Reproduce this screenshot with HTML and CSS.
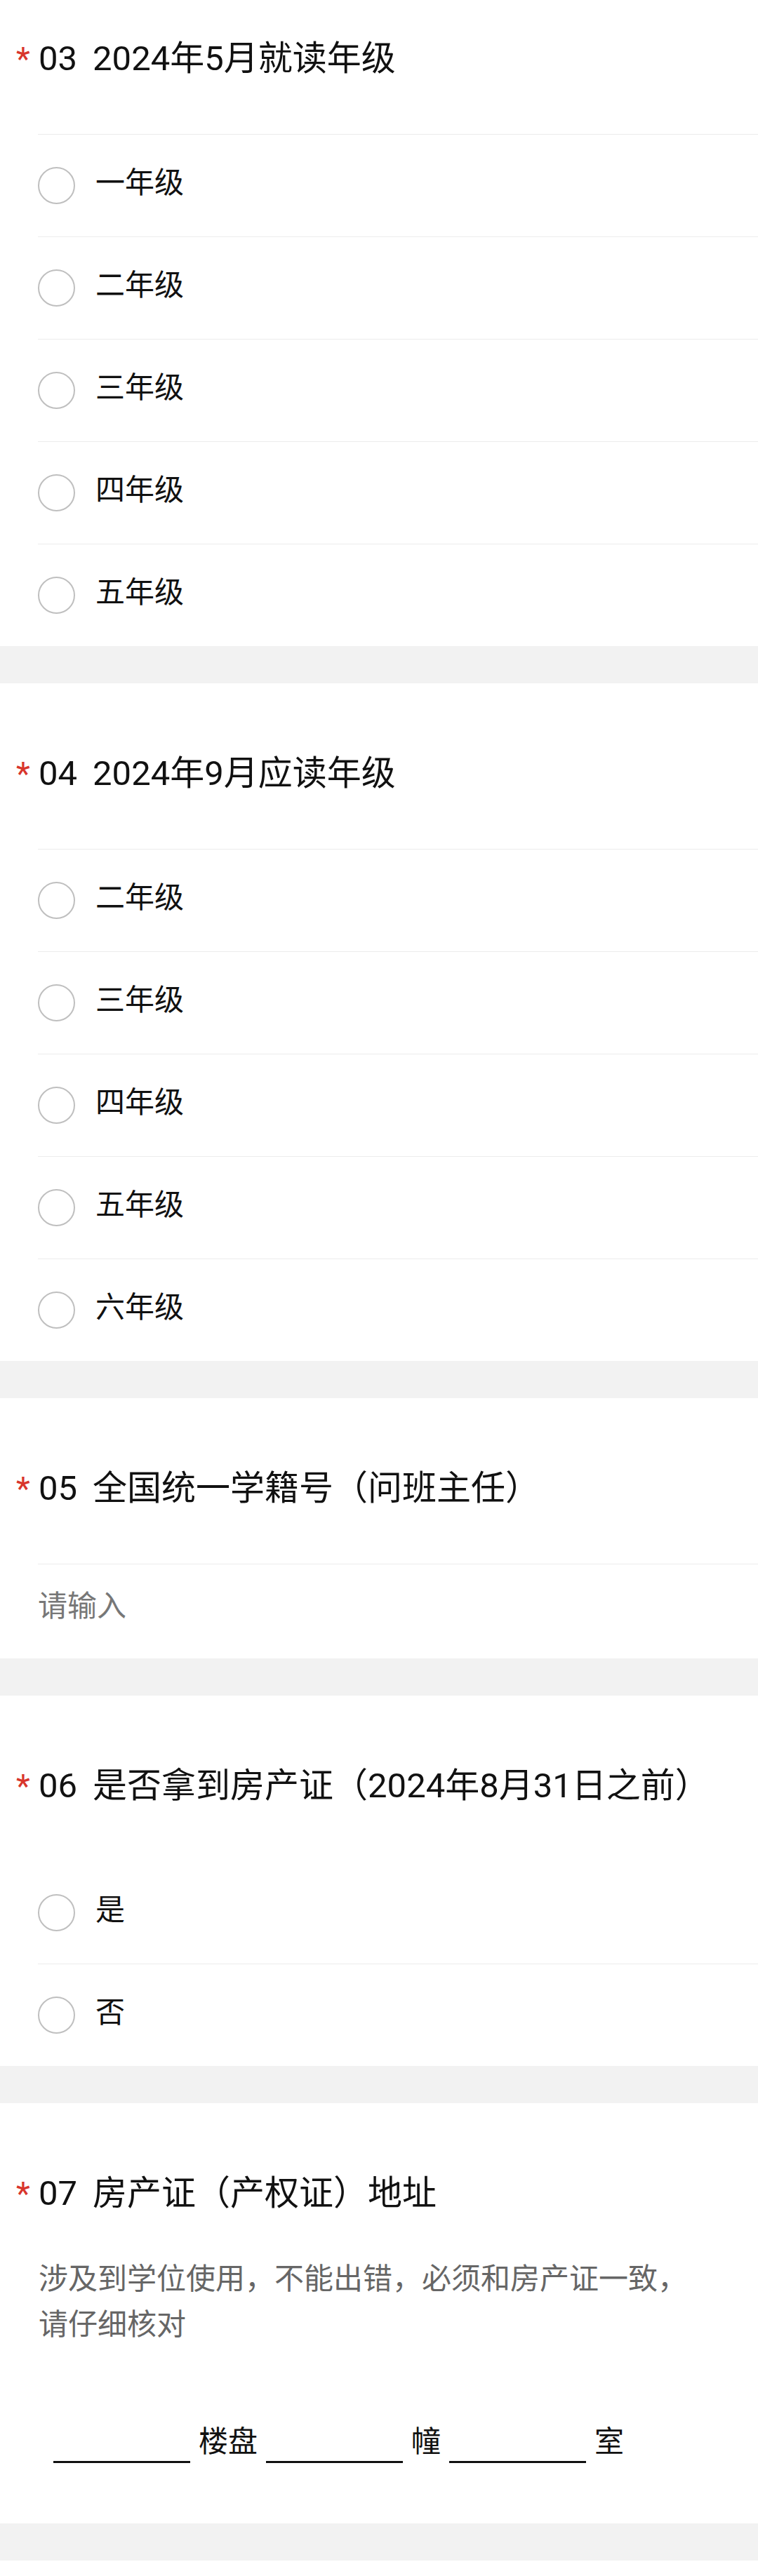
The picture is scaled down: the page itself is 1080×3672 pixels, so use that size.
FILE: index.html
```html
<!DOCTYPE html>
<html lang="zh-CN">
<head>
<meta charset="utf-8">
<title>问卷</title>
<link rel="stylesheet" href="styles.css">
</head>
<body>
<div class="page">
  <section class="q q-first">
    <div class="q-title"><span class="req">*</span><span class="num">03</span><span class="label">2024年5月就读年级</span></div>
    <ul class="options">
      <li class="opt"><span class="radio"></span><span class="opt-text">一年级</span></li>
      <li class="opt"><span class="radio"></span><span class="opt-text">二年级</span></li>
      <li class="opt"><span class="radio"></span><span class="opt-text">三年级</span></li>
      <li class="opt"><span class="radio"></span><span class="opt-text">四年级</span></li>
      <li class="opt"><span class="radio"></span><span class="opt-text">五年级</span></li>
    </ul>
  </section>
  <div class="sep"></div>

  <section class="q">
    <div class="q-title"><span class="req">*</span><span class="num">04</span><span class="label">2024年9月应读年级</span></div>
    <ul class="options">
      <li class="opt"><span class="radio"></span><span class="opt-text">二年级</span></li>
      <li class="opt"><span class="radio"></span><span class="opt-text">三年级</span></li>
      <li class="opt"><span class="radio"></span><span class="opt-text">四年级</span></li>
      <li class="opt"><span class="radio"></span><span class="opt-text">五年级</span></li>
      <li class="opt"><span class="radio"></span><span class="opt-text">六年级</span></li>
    </ul>
  </section>
  <div class="sep"></div>

  <section class="q">
    <div class="q-title"><span class="req">*</span><span class="num">05</span><span class="label">全国统一学籍号（问班主任）</span></div>
    <div class="input">请输入</div>
  </section>
  <div class="sep"></div>

  <section class="q">
    <div class="q-title"><span class="req">*</span><span class="num">06</span><span class="label">是否拿到房产证（2024年8月31日之前）</span></div>
    <ul class="options options-plain">
      <li class="opt"><span class="radio"></span><span class="opt-text">是</span></li>
      <li class="opt"><span class="radio"></span><span class="opt-text">否</span></li>
    </ul>
  </section>
  <div class="sep"></div>

  <section class="q">
    <div class="q-title"><span class="req">*</span><span class="num">07</span><span class="label">房产证（产权证）地址</span></div>
    <p class="desc">涉及到学位使用，不能出错，必须和房产证一致，请仔细核对</p>
    <div class="blanks">
      <span class="blank"></span><span class="blank-text">楼盘</span>
      <span class="blank"></span><span class="blank-text">幢</span>
      <span class="blank"></span><span class="blank-text">室</span>
    </div>
  </section>
  <div class="sep"></div>
</div>
</body>
</html>
```

FILE: styles.css
```css
* {
  box-sizing: border-box;
}

body {
  margin: 0;
  background: #ffffff;
  font-family: Roboto, "Noto Sans CJK SC", "Noto Sans", sans-serif;
  color: #111111;
}

.page {
  width: 1080px;
}

.q {
  background: #ffffff;
  padding-top: 95px;
}

.q-first {
  padding-top: 50px;
}

.q-title {
  display: flex;
  align-items: baseline;
  height: 68px;
  line-height: 68px;
  font-size: 49px;
  padding-left: 23px;
  color: #111111;
}

.req {
  width: 32px;
  flex: none;
  color: #d8352c;
  font-size: 46px;
}

.num {
  margin-right: 22px;
}

.options {
  list-style: none;
  margin: 73px 0 0 54px;
  padding: 0;
}

.opt {
  display: flex;
  align-items: center;
  height: 146px;
  border-top: 1px solid #ececec;
  font-size: 42px;
  line-height: 60px;
  color: #111111;
}

.opt-text {
  margin-bottom: 8px;
}

.options-plain .opt:first-child {
  border-top-color: transparent;
}

.radio {
  flex: none;
  width: 53px;
  height: 53px;
  border: 2px solid #bfbfbf;
  border-radius: 50%;
  margin-right: 29px;
}

.input {
  margin: 73px 0 0 54px;
  height: 135px;
  padding-top: 30px;
  border-top: 1px solid #ececec;
  font-size: 42px;
  line-height: 60px;
  color: #777777;
}

.desc {
  margin: 55px 0 0 0;
  padding: 0 70px 0 55px;
  font-size: 42px;
  line-height: 65px;
  color: #666666;
}

.blanks {
  display: flex;
  align-items: flex-end;
  gap: 12px;
  margin: 105px 0 0 76px;
  padding-bottom: 86px;
  font-size: 42px;
  line-height: 60px;
  color: #111111;
}

.blank {
  width: 195px;
  height: 50px;
  border-bottom: 3px solid #111111;
}

.sep {
  height: 53px;
  background: #f2f2f2;
}
```
